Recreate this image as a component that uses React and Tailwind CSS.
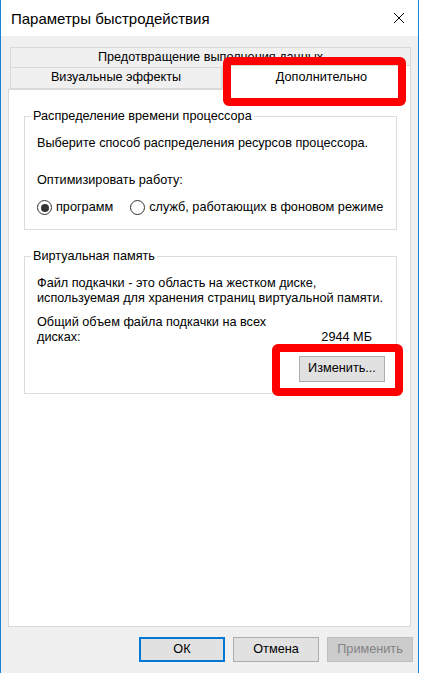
import React from 'react';

const font = { fontFamily: '"Liberation Sans", Arial, sans-serif' };

const Radio = ({ checked, label }) => (
  <label className="flex items-center gap-[4px] whitespace-nowrap">
    <span className="w-[15px] h-[15px] shrink-0 rounded-full border border-[#333333] bg-white flex items-center justify-center">
      {checked && <span className="w-[8px] h-[8px] rounded-full bg-[#333333]" />}
    </span>
    <span>{label}</span>
  </label>
);

const WinButton = ({ children, primary, disabled, className = '' }) => {
  let cls = 'bg-[#e1e1e1] border border-[#adadad] text-black';
  if (primary) cls = 'bg-[#e1e1e1] border-2 border-[#0078d7] text-black';
  if (disabled) cls = 'bg-[#cccccc] border border-[#bfbfbf] text-[#838383]';
  return (
    <div className={`flex items-center justify-center shrink-0 w-[86px] h-[25px] text-[12.7px] ${cls} ${className}`}>
      {children}
    </div>
  );
};

export default function App() {
  return (
    <div className="relative w-[421px] h-[673px] bg-white overflow-hidden" style={font}>
      <div className="w-[419px] h-[673px] border-l border-r border-[#1883d7] bg-[#f0f0f0] flex flex-col">
        {/* title bar */}
        <div className="h-[36px] bg-white flex items-center justify-between pl-[10px] pr-[13px]">
          <span className="text-[15px] text-black leading-none">Параметры быстродействия</span>
          <svg width="12" height="12" viewBox="0 0 12 12">
            <path d="M1 1 L11 11 M11 1 L1 11" stroke="#000" strokeWidth="1" fill="none" />
          </svg>
        </div>

        {/* tabs */}
        <div className="mt-[11px] ml-[9px] w-[401px] flex flex-col text-[12.7px] text-black whitespace-nowrap">
          <div className="h-[21px] border border-[#d9d9d9] bg-[#f0f0f0] flex items-center justify-center">
            Предотвращение выполнения данных
          </div>
          <div className="flex h-[21px]">
            <div className="w-[212px] border border-t-0 border-[#d9d9d9] bg-[#f0f0f0] flex items-center justify-center">
              Визуальные эффекты
            </div>
            <div className="flex-1 -mt-[3px] h-[25px] border border-b-0 border-[#d9d9d9] bg-white flex items-center justify-center pl-[10px] relative z-10">
              Дополнительно
            </div>
          </div>
        </div>

        {/* panel */}
        <div className="ml-[7px] w-[403px] h-[538px] border border-[#d9d9d9] bg-white pt-[18px] pl-[15px] text-[12.7px] text-black whitespace-nowrap">
          <fieldset className="w-[373px] h-[122px] border border-[#dcdcdc] pl-[12px] pr-[11px]">
            <legend className="-ml-[6px] px-[2px] leading-[16px]">Распределение времени процессора</legend>
            <div className="mt-[12px] leading-[15px]">Выберите способ распределения ресурсов процессора.</div>
            <div className="mt-[22px] leading-[15px]">Оптимизировать работу:</div>
            <div className="mt-[12px] flex items-center gap-[17px] leading-[15px]">
              <Radio checked label="программ" />
              <Radio label="служб, работающих в фоновом режиме" />
            </div>
          </fieldset>

          <fieldset className="mt-[18px] w-[373px] h-[146px] border border-[#dcdcdc] pl-[12px] pr-[11px]">
            <legend className="-ml-[6px] px-[2px] leading-[16px]">Виртуальная память</legend>
            <div className="mt-[12px] leading-[15px]">
              <div>Файл подкачки - это область на жестком диске,</div>
              <div>используемая для хранения страниц виртуальной памяти.</div>
            </div>
            <div className="mt-[9px] leading-[15px]">
              <div>Общий объем файла подкачки на всех</div>
              <div className="flex justify-between pr-[13px]">
                <span>дисках:</span>
                <span>2944 МБ</span>
              </div>
            </div>
            <div className="mt-[11px] flex justify-end">
              <WinButton className="h-[26px]">Изменить...</WinButton>
            </div>
          </fieldset>
        </div>

        {/* dialog buttons */}
        <div className="mt-[10px] flex justify-end gap-[8px] pr-[5px]">
          <WinButton primary>ОК</WinButton>
          <WinButton>Отмена</WinButton>
          <WinButton disabled>Применить</WinButton>
        </div>
      </div>

      {/* red annotations */}
      <div className="absolute left-[223px] top-[57px] w-[183px] h-[49px] border-[8px] border-[#ff0000] rounded-[6px] z-20" />
      <div className="absolute left-[272px] top-[344px] w-[131px] h-[52px] border-[8px] border-[#ff0000] rounded-[6px] z-20" />
    </div>
  );
}
